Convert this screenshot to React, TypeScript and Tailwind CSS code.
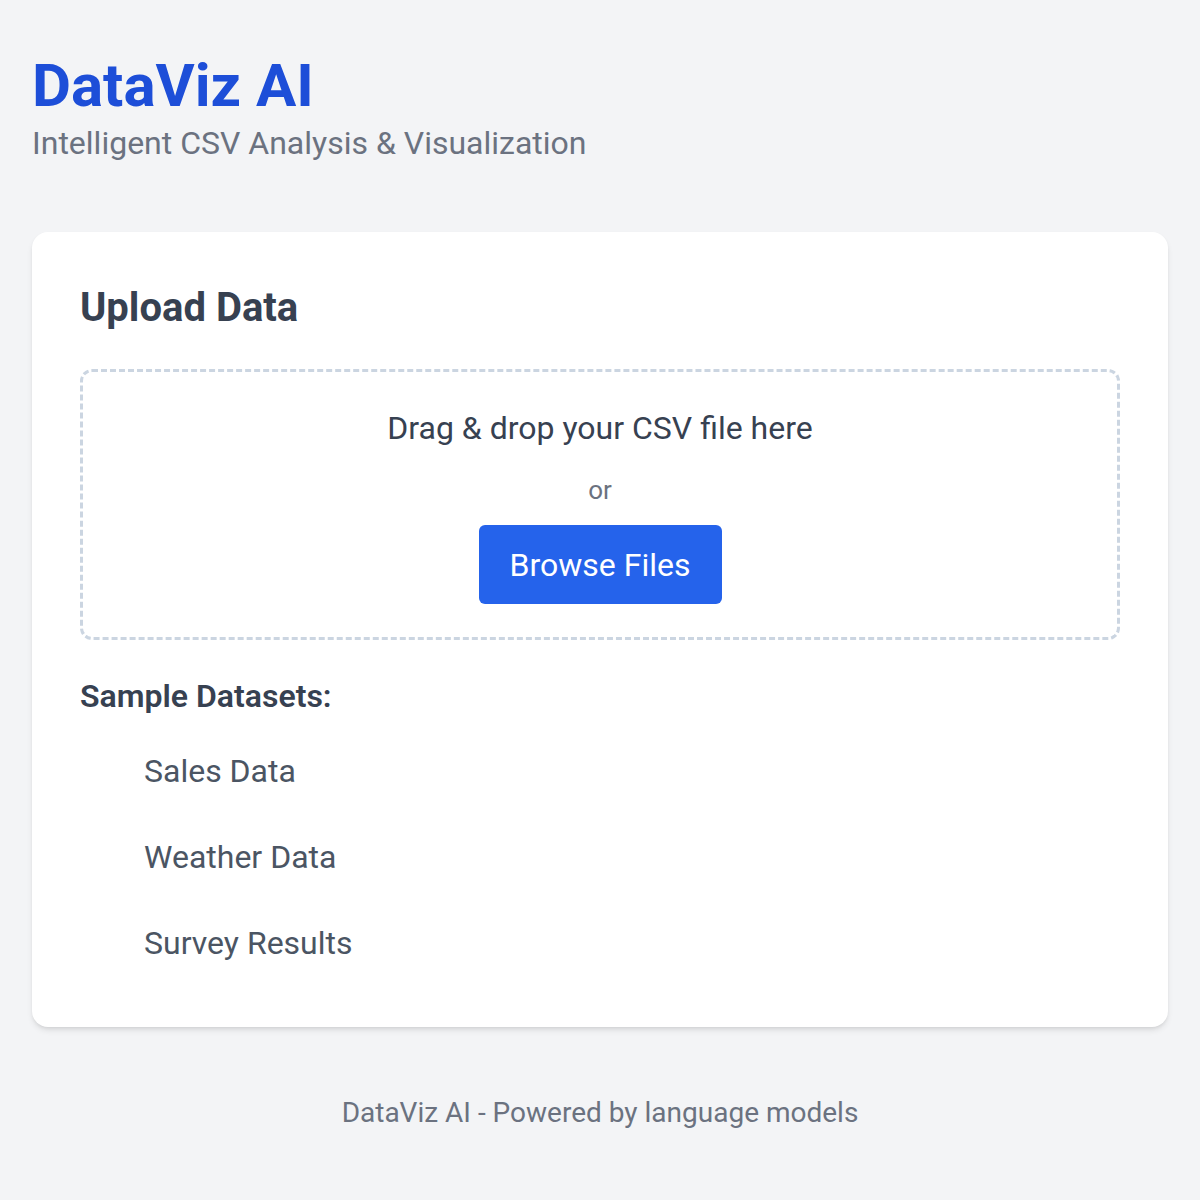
import React from "react";

export default function App() {
  const samples = ["Sales Data", "Weather Data", "Survey Results"];
  return (
    <div
      className="min-h-[1200px] bg-[#f3f4f6] px-8 pt-[50px]"
      style={{ fontFamily: "Roboto, 'Noto Sans', sans-serif" }}
    >
      <header>
        <h1 className="text-[60px] leading-[72px] font-bold text-[#1d4ed8]">DataViz AI</h1>
        <p className="text-[32px] leading-[42px] text-[#6b7280]">
          Intelligent CSV Analysis &amp; Visualization
        </p>
      </header>

      <main className="mt-[68px] rounded-2xl bg-white px-12 pt-12 pb-[41px] shadow-md">
        <h2 className="text-[40px] leading-[56px] font-bold text-[#374151]">Upload Data</h2>

        <div className="mt-[33px] flex flex-col items-center rounded-xl border-[3px] border-dashed border-[#cbd5e1] px-8 pt-[34px] pb-[33px]">
          <p className="text-[32px] leading-[44px] text-[#374151]">Drag &amp; drop your CSV file here</p>
          <p className="mt-[22px] text-[26px] leading-[36px] text-[#6b7280]">or</p>
          <button className="mt-[17px] h-[79px] w-[243px] rounded-md bg-[#2563eb] text-[32px] leading-[44px] text-white">
            Browse Files
          </button>
        </div>

        <h3 className="mt-[34px] text-[32px] leading-[44px] font-semibold text-[#374151]">Sample Datasets:</h3>
        <ul className="mt-[10px] pl-[64px]">
          {samples.map((s) => (
            <li key={s}>
              <button className="py-[21px] text-[32px] leading-[44px] text-[#4b5563]">{s}</button>
            </li>
          ))}
        </ul>
      </main>

      <footer className="mt-[68px] text-center text-[28px] leading-[36px] text-[#6b7280]">
        DataViz AI - Powered by language models
      </footer>
    </div>
  );
}
